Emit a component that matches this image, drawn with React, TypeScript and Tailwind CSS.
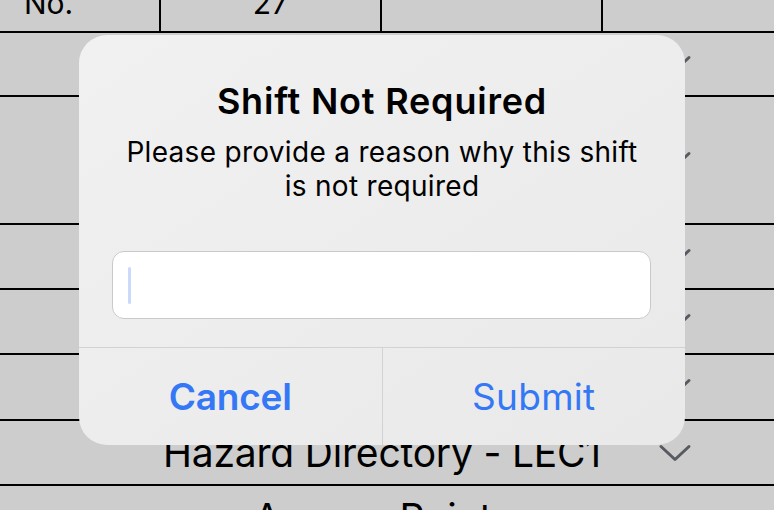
import React from "react";

const font = { fontFamily: "Inter, 'Noto Sans', sans-serif" };

function Chevron() {
  return (
    <svg width="34" height="19" viewBox="0 0 34 19" fill="none">
      <path d="M3 3l14 13L31 3" stroke="#575b61" strokeWidth="3" strokeLinecap="round" strokeLinejoin="round" />
    </svg>
  );
}

function Row({ h, children }: { h: string; children?: React.ReactNode }) {
  return (
    <div className={`relative flex items-center justify-center ${h} border-b-2 border-black`}>
      {children}
      <div className="absolute left-[658px] top-1/2 -translate-y-1/2 flex">
        <Chevron />
      </div>
    </div>
  );
}

export default function App() {
  return (
    <div className="relative w-[774px] h-[510px] overflow-hidden bg-[#cdcdcd]" style={font}>
      {/* table behind the alert */}
      <div className="flex flex-col">
        <div className="flex h-[33px] border-b-2 border-black overflow-hidden">
          <div className="w-[161px] border-r-2 border-black pl-[24px] flex items-start">
            <span className="text-[30px] leading-none -mt-[12px] text-black">No.</span>
          </div>
          <div className="w-[221px] border-r-2 border-black flex items-start justify-center">
            <span className="text-[30px] leading-none -mt-[12px] text-black">27</span>
          </div>
          <div className="w-[221px] border-r-2 border-black" />
          <div className="flex-1" />
        </div>
        <Row h="h-[64px]" />
        <Row h="h-[128px]" />
        <Row h="h-[65px]" />
        <Row h="h-[65px]" />
        <Row h="h-[66px]" />
        <Row h="h-[65px]">
          <span className="pr-[10px] text-[39px] leading-none text-black tracking-[-0.2px]">Hazard Directory - LEC1</span>
        </Row>
        <div className="flex justify-center pr-[28px] pt-[12px]">
          <span className="text-[39px] leading-none text-black tracking-[-0.1px]">Access Point</span>
        </div>
      </div>

      {/* alert */}
      <div className="absolute left-[79px] top-[35px] w-[606px] h-[410px] rounded-[28px] bg-gradient-to-br from-[#f1f1f1] to-[#e9e9e9] flex flex-col overflow-hidden">
        <div className="flex flex-col items-center pt-[44px] px-[20px]">
          <h1 className="text-[36px] leading-[44px] font-semibold text-black tracking-[0.8px]">Shift Not Required</h1>
          <p className="mt-[12px] text-[28px] leading-[34px] text-black text-center tracking-[0.3px]">
            Please provide a reason why this shift
            <br />
            is not required
          </p>
        </div>
        <div className="pl-[33px] pr-[34px] mt-[48px]">
          <div className="h-[68px] bg-white rounded-[12px] border border-[#c9c9c9] flex items-center pl-[15px]">
            <div className="w-[3px] h-[37px] rounded-full bg-[#cbd9fb]" />
          </div>
        </div>
        <div className="mt-auto h-[98px] border-t border-[#d2d2d2] flex">
          <button className="flex-1 border-r border-[#d2d2d2] text-[37px] font-semibold text-[#3478f6] tracking-[-0.2px]">Cancel</button>
          <button className="flex-1 text-[37px] text-[#3478f6] tracking-[0.3px]">Submit</button>
        </div>
      </div>
    </div>
  );
}
